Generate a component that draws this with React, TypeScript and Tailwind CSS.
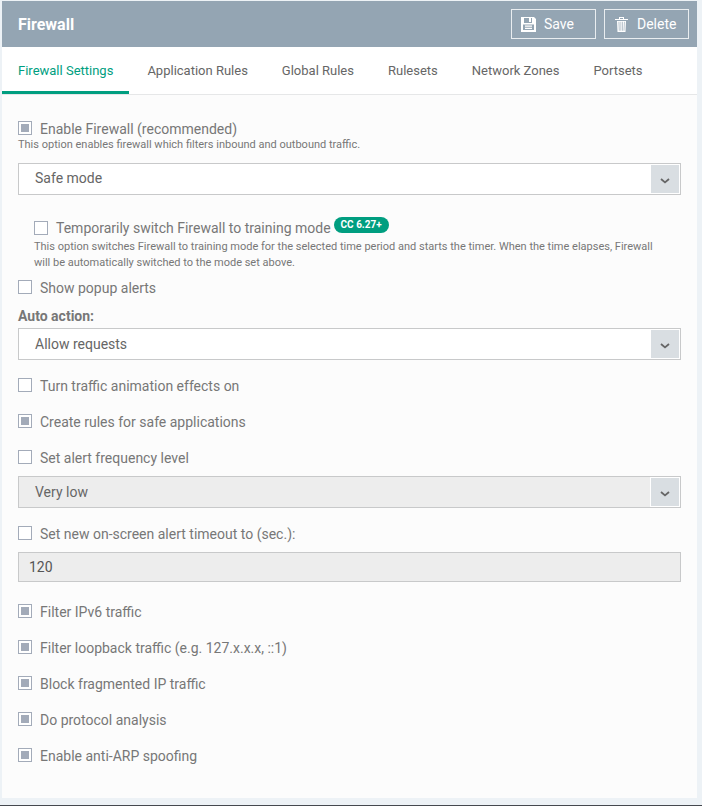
import { useState } from 'react';
import clsx from 'clsx';

const TABS = ['Firewall Settings', 'Application Rules', 'Global Rules', 'Rulesets', 'Network Zones', 'Portsets'];

function SaveIcon() {
  return (
    <svg width="15" height="15" viewBox="0 0 15 15" fill="#fff">
      <path fillRule="evenodd" d="M0 0H13L15 2V15H0ZM3 1V6H11V1H10V5H8V1ZM2 7.5V13H13V7.5ZM4 8.5H11V9.7H4ZM4 10.8H11V12H4Z" />
    </svg>
  );
}

function TrashIcon() {
  return (
    <svg width="13" height="15" viewBox="0 0 13 15" fill="#fff">
      <path fillRule="evenodd" d="M4 0H9V2H13V3H0V2H4ZM5 1V2H8V1Z" />
      <path fillRule="evenodd" d="M2 4H11L10.5 15H2.5ZM3.6 4.8L3.9 13.8H4.5L4.3 4.8ZM5.6 4.8V13.8H6.2V4.8ZM7.1 4.8V13.8H7.7V4.8ZM9 4.8L8.7 13.8H9.3L9.6 4.8Z" />
    </svg>
  );
}

function Checkbox({ label, checked = false, className = '', children = null }: any) {
  const [on, setOn] = useState(checked);

  return (
    <div onClick={() => setOn(!on)} className={clsx('flex h-4 items-start gap-2 text-sm', className)}>
      <span className="flex size-3.5 shrink-0 items-center justify-center border border-[#a3abb9] bg-white">
        {on && <span className="size-2 bg-[#a3abb9]" />}
      </span>
      <span className={clsx('whitespace-nowrap', children ? 'leading-3.5' : 'leading-4')}>{label}</span>
      {children}
    </div>
  );
}

function Select({ value, disabled = false, className = '', textClass = '' }: any) {
  return (
    <div
      className={clsx(
        'flex h-8 items-center justify-between border border-[#c8c9ca] pl-4 text-sm text-[#666]',
        disabled ? 'bg-[#ededed]' : 'bg-white',
        className
      )}
    >
      <span className={textClass}>{value}</span>
      <span className="flex h-[30px] w-[30px] items-center justify-center border border-white bg-[#d9dee2]">
        <svg width="10" height="6" viewBox="0 0 10 6" fill="none" stroke="#666" strokeWidth="1.8" className="mt-[3px]">
          <path d="M1 1l4 3.4L9 1" />
        </svg>
      </span>
    </div>
  );
}

export default function App() {
  const [active, setActive] = useState(0);

  return (
    <div className="flex h-[806px] w-[702px] flex-col border-b border-[#45494f] bg-[#edf2f6] pt-px pr-[5px] pl-0.5 font-[Roboto,sans-serif] text-[#777]">
      <div className="h-[797px] bg-[#fcfcfc]">
        <header className="flex h-[46px] items-center justify-between bg-[#94a5b3] pr-2 pl-4 text-white">
          <h1 className="pt-0.5 text-base font-bold">Firewall</h1>
          <div className="flex gap-2 text-sm">
            <button className="flex h-[30px] w-[85px] items-center gap-2 border border-[#e9edf0] pl-[9px]">
              <SaveIcon />
              Save
            </button>
            <button className="flex h-[30px] w-[85px] items-center gap-[9px] border border-[#e9edf0] pl-2.5">
              <TrashIcon />
              Delete
            </button>
          </div>
        </header>

        <nav className="flex h-12 gap-0.5 border-b border-[#e6e7e8] bg-white text-[13px]">
          {TABS.map((tab, idx) => (
            <button
              key={tab}
              onClick={() => setActive(idx)}
              className={clsx(
                'h-[47px] border-b-[3px] px-4 pt-[3px] whitespace-nowrap',
                active === idx ? 'border-[#009e80] text-[#009e80]' : 'border-transparent text-[#666]'
              )}
            >
              {tab}
            </button>
          ))}
        </nav>

        <div className="px-4 pt-[26px]">
          <Checkbox label="Enable Firewall (recommended)" checked />
          <p className="text-[11px] leading-4">This option enables firewall which filters inbound and outbound traffic.</p>
          <Select value="Safe mode" className="mt-2.5" textClass="-mt-0.5" />

          <div className="mt-[26px] pl-4">
            <Checkbox label="Temporarily switch Firewall to training mode">
              <span className="-mt-1 -ml-[5px] h-4 rounded-full bg-[#009e80] px-[7px] text-[10px] leading-4 font-bold whitespace-nowrap text-white">
                CC 6.27+
              </span>
            </Checkbox>
            <p className="mt-0.5 text-[11px] leading-4">
              This option switches Firewall to training mode for the selected time period and starts the timer. When the time elapses, Firewall
              <br />
              will be automatically switched to the mode set above.
            </p>
          </div>

          <Checkbox label="Show popup alerts" className="mt-[9px]" />
          <div className="mt-3 text-sm leading-4 font-bold">Auto action:</div>
          <Select value="Allow requests" className="mt-1" />

          <Checkbox label="Turn traffic animation effects on" className="mt-[18px]" />
          <Checkbox label="Create rules for safe applications" checked className="mt-5" />
          <Checkbox label="Set alert frequency level" className="mt-5" />
          <Select value="Very low" disabled className="mt-2.5" />

          <Checkbox label="Set new on-screen alert timeout to (sec.):" className="mt-[18px]" />
          <input
            defaultValue="120"
            disabled
            className="mt-2.5 block h-[30px] w-full border border-[#c8c9ca] bg-[#ededed] px-2.5 text-sm text-[#555]"
          />

          <div className="mt-[22px] space-y-5">
            <Checkbox label="Filter IPv6 traffic" checked />
            <Checkbox label="Filter loopback traffic (e.g. 127.x.x.x, ::1)" checked />
            <Checkbox label="Block fragmented IP traffic" checked />
            <Checkbox label="Do protocol analysis" checked />
            <Checkbox label="Enable anti-ARP spoofing" checked />
          </div>
        </div>
      </div>
    </div>
  );
}
